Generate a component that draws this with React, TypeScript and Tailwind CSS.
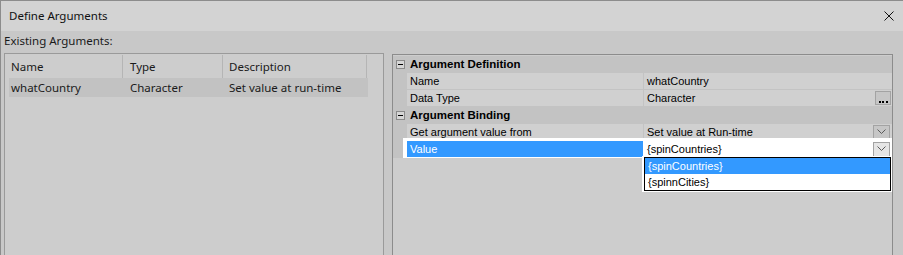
import React from "react"

const ui = "font-['Segoe_UI','Noto_Sans',sans-serif]"
const grid = "font-['Liberation_Sans',Arial,sans-serif] text-[11px] text-black"

const Chevron = () => (
  <svg width="9" height="6" viewBox="0 0 9 6" className="block">
    <path d="M0.5 0.5 L4.5 4.5 L8.5 0.5" fill="none" stroke="#5a5a5a" strokeWidth="1" />
  </svg>
)

const DropButton = ({ light = false }: { light?: boolean }) => (
  <div
    className={`w-[17px] h-[15px] mr-[2px] border border-[#a3a3a3] flex items-center justify-center ${
      light ? "bg-[#e5e5e5]" : "bg-[#c6c6c6]"
    }`}
  >
    <Chevron />
  </div>
)

const MinusBox = () => (
  <div className="w-[9px] h-[9px] border border-[#8a8a8a] bg-[#d6d6d6] flex items-center justify-center">
    <div className="w-[5px] h-px bg-black" />
  </div>
)

const Category = ({ title }: { title: string }) => (
  <div className="h-[17px] bg-[#c3c3c3] flex items-center pl-[3px]">
    <MinusBox />
    <span className="ml-[5px] font-bold text-[11.5px]">{title}</span>
  </div>
)

const PropRow = ({ label, value, extra }: { label: string; value: string; extra?: React.ReactNode }) => (
  <div className="h-[17px] bg-[#c3c3c3] flex items-start pl-[14px]">
    <div className="w-[236px] h-[16px] bg-[#d0d0d0] pl-[3px] flex items-center">{label}</div>
    <div className="ml-px flex-1 h-[16px] bg-[#d0d0d0] pl-[3px] flex items-center justify-between">
      <span>{value}</span>
      {extra}
    </div>
  </div>
)

export default function App() {
  return (
    <div className={`w-[903px] h-[255px] overflow-hidden bg-[#c8c8c8] border-t border-l border-[#8c8c8c] flex flex-col ${ui}`}>
      <div className="h-[30px] shrink-0 bg-[#d3d3d3] flex items-center justify-between pl-[8px] pr-[9px]">
        <span className="text-[11.5px] text-[#111]">Define Arguments</span>
        <svg width="10" height="10" viewBox="0 0 10 10" className="block">
          <path d="M0.5 0.5 L9.5 9.5 M9.5 0.5 L0.5 9.5" stroke="#111" strokeWidth="1" />
        </svg>
      </div>

      <div className="pl-[3px] flex-1">
        <div className="h-[22px] pt-[2px] text-[11.5px] leading-[16px] text-[#1a1a1a]">Existing Arguments:</div>

        <div className="flex items-start">
          {/* existing arguments list */}
          <div className="w-[380px] h-[210px] border border-[#9a9a9a] bg-[#cdcdcd] pl-[4px] pt-px text-[11.5px] text-[#1a1a1a]">
            <div className="flex h-[23px]">
              <div className="w-[114px] border-r border-[#b5b5b5] pl-[2px] flex items-center">Name</div>
              <div className="w-[100px] border-r border-[#b5b5b5] pl-[7px] flex items-center">Type</div>
              <div className="w-[144px] border-r border-[#b5b5b5] pl-[6px] flex items-center">Description</div>
            </div>
            <div className="flex h-[19px] w-[359px] bg-[#c2c2c2] items-center">
              <div className="w-[114px] pl-[2px]">whatCountry</div>
              <div className="w-[100px] pl-[7px]">Character</div>
              <div className="w-[144px] pl-[6px]">Set value at run-time</div>
            </div>
          </div>

          {/* property grid */}
          <div className={`relative ml-[8px] mt-px w-[501px] h-[210px] border border-[#8c8c8c] bg-[#cdcdcd] pt-px ${grid}`}>
            <Category title="Argument Definition" />
            <PropRow label="Name" value="whatCountry" />
            <PropRow
              label="Data Type"
              value="Character"
              extra={
                <div className="w-[16px] h-[14px] mr-px border border-[#a3a3a3] bg-[#c6c6c6]">
                  <svg width="14" height="12" viewBox="0 0 14 12" className="block">
                    <rect x="3" y="9" width="2" height="2" fill="#000" />
                    <rect x="6" y="9" width="2" height="2" fill="#000" />
                    <rect x="10" y="9" width="2" height="2" fill="#000" />
                  </svg>
                </div>
              }
            />
            <Category title="Argument Binding" />
            <PropRow label="Get argument value from" value="Set value at Run-time" extra={<DropButton />} />

            <div className="relative z-10 -mt-[3px] flex h-[20px]">
              <div className="w-[10px] bg-[#c3c3c3]" />
              <div className="flex-1 bg-white pt-[3px] pb-px pl-[4px] flex items-start">
                <div className="w-[236px] h-[16px] bg-[#3399ff] text-white pl-[3px] flex items-center">Value</div>
                <div className="ml-px flex-1 h-[16px] pl-[3px] flex items-center justify-between">
                  <span>{"{spinCountries}"}</span>
                  <DropButton light />
                </div>
              </div>
            </div>

            {/* open dropdown list */}
            <div className="absolute z-20 left-[249px] top-[101px] w-[250px] h-[36px] bg-white pl-[2px] pr-px py-px">
              <div className="h-[34px] border border-black">
                <div className="h-[16px] bg-[#3399ff] text-white pl-[3px] flex items-center">{"{spinCountries}"}</div>
                <div className="h-[16px] pl-[3px] flex items-center">{"{spinnCities}"}</div>
              </div>
            </div>
          </div>
        </div>
      </div>
    </div>
  )
}
